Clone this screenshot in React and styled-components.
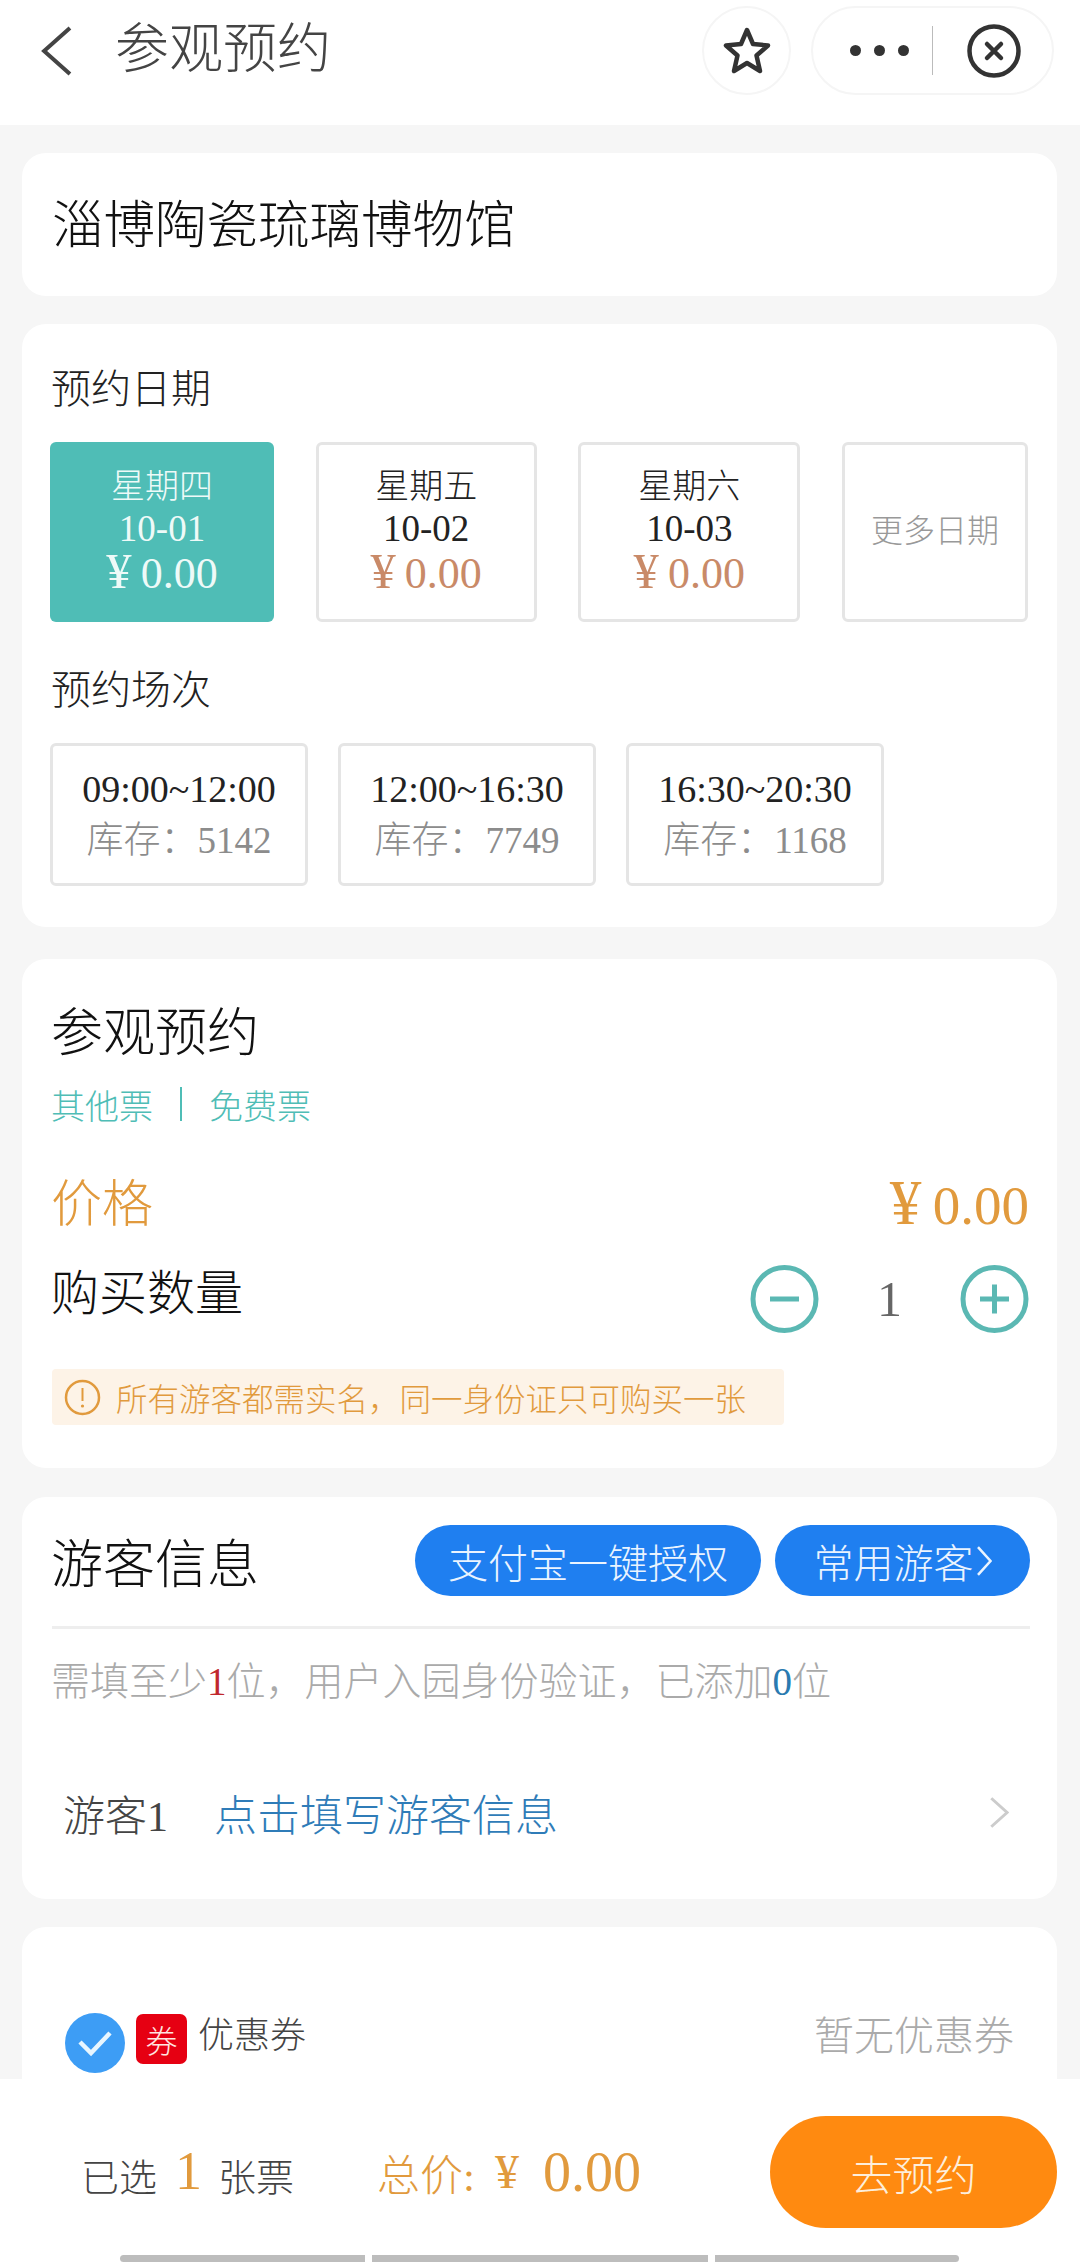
import React from 'react';
import styled, { createGlobalStyle } from 'styled-components';

const orange = '#e19a3d';
const teal = '#4fbdb6';

const GlobalStyle = createGlobalStyle`
    html, body {
        margin: 0;
        padding: 0;
        background: #f6f6f6;
    }
    body {
        font-family: "Liberation Serif", "Noto Sans CJK SC", serif;
        font-weight: 300;
    }
    * {
        box-sizing: border-box;
    }
`;

const Page = styled.div`
    width: 1080px;
    height: 2265px;
    display: flex;
    flex-direction: column;
    overflow: hidden;
`;

const Header = styled.header`
    flex: 0 0 125px;
    background: #fff;
    display: flex;
    align-items: flex-start;
    padding: 6px 26px 0 41px;
`;

const BackBox = styled.div`
    height: 89px;
    display: flex;
    align-items: center;
`;

const HeaderTitle = styled.div`
    height: 89px;
    line-height: 88px;
    margin-left: 43px;
    font-size: 54px;
    color: #444;
`;

const Actions = styled.div`
    margin-left: auto;
    display: flex;
    gap: 20px;
`;

const RoundButton = styled.div`
    width: 89px;
    height: 89px;
    border: 2px solid #f5f5f5;
    border-radius: 50%;
    display: flex;
    align-items: center;
    justify-content: center;
`;

const Capsule = styled.div`
    width: 243px;
    height: 89px;
    border: 2px solid #f5f5f5;
    border-radius: 45px;
    display: flex;
    align-items: center;
    padding-left: 37px;
`;

const Dots = styled.div`
    display: flex;
    gap: 13px;
    width: 82px;
    span {
        width: 11px;
        height: 11px;
        border-radius: 50%;
        background: #333;
    }
`;

const CapsuleLine = styled.div`
    width: 1px;
    height: 49px;
    background: #bbb;
    margin-right: 34px;
`;

const Main = styled.main`
    flex: 1;
    min-height: 0;
    overflow: hidden;
    padding: 28px 23px 0 22px;
    display: flex;
    flex-direction: column;
`;

const Card = styled.section`
    flex: none;
    background: #fff;
    border-radius: 24px;
    height: ${props => props.height}px;
    margin-bottom: ${props => props.gap || 0}px;
    padding: ${props => props.pad};
`;

const ShopName = styled.div`
    height: 143px;
    line-height: 146px;
    font-size: 51.500px;
    color: #111;
`;

const SectionLabel = styled.div`
    height: 40px;
    line-height: 41px;
    font-size: 40px;
    color: #222;
    margin-top: ${props => props.top}px;
    margin-left: 1px;
`;

const DateRow = styled.div`
    display: flex;
    gap: 41.67px;
    margin-top: 33px;
`;

const DateTile = styled.div`
    width: ${props => props.width}px;
    height: 180px;
    border-radius: 6px;
    border: ${props => (props.active ? 'none' : '3px solid #e5e5e5')};
    background: ${props => (props.active ? teal : '#fff')};
    color: ${props => (props.active ? '#eefaf8' : '#222')};
    display: flex;
    flex-direction: column;
    align-items: center;
    justify-content: center;
`;

const DateWeek = styled.div`
    font-size: 34px;
    line-height: 42px;
`;

const DateDay = styled.div`
    font-size: 37px;
    line-height: 42px;
`;

const DatePrice = styled.div`
    font-size: 44px;
    line-height: 48px;
    color: ${props => (props.active ? '#eefaf8' : '#c98a68')};
`;

const Yen = styled.span`
    font-size: 1.15em;
    line-height: 0;
    margin-right: 0.18em;
`;

const MoreDates = styled.div`
    font-size: 32px;
    line-height: 42px;
    margin-top: -2px;
    color: #999;
`;

const SessionRow = styled.div`
    display: flex;
    gap: 30px;
    margin-top: 33px;
`;

const SessionTile = styled.div`
    width: 258px;
    height: 143px;
    border-radius: 6px;
    border: 3px solid #e5e5e5;
    display: flex;
    flex-direction: column;
    align-items: center;
    justify-content: center;
`;

const SessionTime = styled.div`
    font-size: 38px;
    line-height: 52px;
    color: #222;
`;

const SessionStock = styled.div`
    font-size: 37px;
    line-height: 52px;
    color: #8c8c8c;
`;

const BigTitle = styled.div`
    font-size: 52px;
    line-height: 62px;
    margin-left: -1px;
    color: #111;
`;

const Tabs = styled.div`
    display: flex;
    align-items: center;
    height: 40px;
    margin: 19px 0 0 -1px;
    font-size: 34px;
    color: ${teal};
    i {
        width: 2px;
        height: 34px;
        background: ${teal};
        margin: 0 27px;
    }
`;

const PriceRow = styled.div`
    display: flex;
    justify-content: space-between;
    align-items: center;
    height: 60px;
    margin-top: 51px;
    color: ${orange};
`;

const PriceLabel = styled.div`
    font-size: 51px;
    line-height: 56px;
    margin-left: -1px;
`;

const PriceValue = styled.div`
    font-size: 55px;
`;

const QtyRow = styled.div`
    display: flex;
    justify-content: space-between;
    align-items: flex-start;
    height: 68px;
    margin-top: 30px;
`;

const QtyLabel = styled.div`
    font-size: 48px;
    line-height: 58px;
    margin-left: -1px;
    color: #111;
`;

const Stepper = styled.div`
    display: flex;
    align-items: center;
    height: 68px;
`;

const QtyValue = styled.div`
    width: 141px;
    text-align: center;
    font-size: 50px;
    color: #666;
`;

const Notice = styled.div`
    width: 732px;
    height: 56px;
    margin-top: 36px;
    padding-left: 12px;
    border-radius: 4px;
    background: #fdf3e7;
    display: flex;
    align-items: center;
    gap: 15px;
    font-size: 31.500px;
    color: ${orange};
`;

const VisitorHead = styled.div`
    display: flex;
    align-items: center;
    gap: 14px;
    height: 71px;
    padding-bottom: 2px;
`;

const VisitorTitle = styled.div`
    font-size: 52px;
    margin-left: -1px;
    color: #111;
    margin-right: auto;
`;

const BlueButton = styled.div`
    width: ${props => props.width}px;
    height: 71px;
    border-radius: 36px;
    background: #1f7ff0;
    color: #eaf4ff;
    font-size: 40px;
    display: flex;
    align-items: center;
    justify-content: center;
    gap: 3px;
`;

const Divider = styled.div`
    height: 3px;
    background: #eeeeee;
    margin-top: 29px;
`;

const Hint = styled.div`
    height: 40px;
    line-height: 40px;
    font-size: 39px;
    margin: 33px 0 0 -1px;
    color: #aaa;
`;

const HintCount = styled.span`
    color: ${props => props.color};
`;

const VisitorRow = styled.div`
    display: flex;
    align-items: center;
    height: 60px;
    margin-top: 80px;
    padding: 0 21px 0 11px;
`;

const VisitorName = styled.div`
    font-size: 42px;
    color: #444;
`;

const VisitorLink = styled.div`
    font-size: 43px;
    color: #2f7cb8;
    margin: 0 auto 0 46px;
`;

const CouponRow = styled.div`
    display: flex;
    align-items: flex-start;
`;

const CheckMark = styled.div`
    width: 60px;
    height: 60px;
    margin-top: -1px;
    border-radius: 50%;
    background: #3d9df5;
    display: flex;
    align-items: center;
    justify-content: center;
`;

const CouponBadge = styled.div`
    width: 51px;
    height: 50px;
    margin: 0 11px 0 11px;
    border-radius: 7px;
    background: #e60012;
    color: #ffe6e0;
    font-size: 32px;
    display: flex;
    align-items: center;
    justify-content: center;
`;

const CouponLabel = styled.div`
    font-size: 36px;
    line-height: 44px;
    color: #444;
`;

const CouponEmpty = styled.div`
    margin-left: auto;
    font-size: 40px;
    line-height: 46px;
    color: #aaa;
`;

const Footer = styled.footer`
    flex: 0 0 186px;
    background: #fff;
    padding-top: 37px;
`;

const FooterRow = styled.div`
    display: flex;
    align-items: center;
    height: 112px;
    padding: 0 23px 0 81px;
`;

const Selected = styled.div`
    display: flex;
    align-items: center;
    width: 296px;
    font-size: 38px;
    color: #444;
    padding-top: 4px;
`;

const SelectedCount = styled.span`
    font-size: 54px;
    line-height: 60px;
    color: ${orange};
    margin: -6px 16px 0 18px;
`;

const Total = styled.div`
    display: flex;
    align-items: center;
    color: ${orange};
`;

const TotalLabel = styled.span`
    font-size: 43px;
    margin-right: 20px;
`;

const TotalYen = styled.span`
    font-size: 48px;
    line-height: 48px;
    margin-right: 24px;
`;

const TotalValue = styled.span`
    font-size: 56px;
`;

const GoButton = styled.div`
    margin-left: auto;
    width: 287px;
    height: 112px;
    border-radius: 56px;
    background: #ff8a10;
    color: #fdeedb;
    font-size: 42px;
    display: flex;
    align-items: center;
    justify-content: center;
`;

const Bars = styled.div`
    display: flex;
    gap: 7px;
    margin: 27px 0 0 120px;
`;

const Bar = styled.div`
    width: ${props => props.width}px;
    height: 7px;
    background: #bdbdbd;
    border-radius: ${props => props.radius};
`;

const Chevron = ({ w, h, color, sw, flip }) => (
    <svg width={w} height={h} viewBox="0 0 30 50" preserveAspectRatio="none" fill="none">
        <polyline
            points={flip ? '28,2 3,25 28,48' : '2,2 27,25 2,48'}
            stroke={color}
            strokeWidth={sw}
            vectorEffect="non-scaling-stroke"
        />
    </svg>
);

const StarIcon = () => (
    <svg width="50" height="50" viewBox="0 0 50 50" fill="none">
        <path
            d="M25 4 L31 18 L46 19.500 L34.500 29.500 L38 45 L25 37 L12 45 L15.500 29.500 L4 19.500 L19 18 Z"
            stroke="#333"
            strokeWidth="4.500"
            strokeLinejoin="round"
        />
    </svg>
);

const CloseIcon = () => (
    <svg width="54" height="54" viewBox="0 0 54 54" fill="none">
        <circle cx="27" cy="27" r="24.500" stroke="#333" strokeWidth="4.500" />
        <path d="M20 20 L34 34 M34 20 L20 34" stroke="#333" strokeWidth="4.500" strokeLinecap="round" />
    </svg>
);

const StepIcon = ({ plus }) => (
    <svg width="69" height="68" viewBox="0 0 69 68" fill="none">
        <circle cx="34.500" cy="34" r="31.500" stroke="#5bb8b3" strokeWidth="5" />
        <path d={plus ? 'M20 34 H49 M34.500 19.500 V48.500' : 'M20 34 H49'} stroke="#5bb8b3" strokeWidth="5" />
    </svg>
);

const NoticeIcon = () => (
    <svg width="37" height="37" viewBox="0 0 37 37" fill="none">
        <circle cx="18.500" cy="18.500" r="16.500" stroke={orange} strokeWidth="2.500" />
        <path d="M18.500 9 V22" stroke={orange} strokeWidth="2" />
        <circle cx="18.500" cy="27" r="1.600" fill={orange} />
    </svg>
);

const CheckIcon = () => (
    <svg width="38" height="30" viewBox="0 0 38 30" fill="none">
        <path d="M4 14 L15 25 L34 5" stroke="#e8f6ff" strokeWidth="4.500" />
    </svg>
);

const dates = [
    { week: '星期四', day: '10-01', width: 224, active: true },
    { week: '星期五', day: '10-02', width: 221 },
    { week: '星期六', day: '10-03', width: 222 },
];

const sessions = [
    { time: '09:00~12:00', stock: 5142 },
    { time: '12:00~16:30', stock: 7749 },
    { time: '16:30~20:30', stock: 1168 },
];

const App = () => {
    return (
        <Page>
            <GlobalStyle />
            <Header>
                <BackBox>
                    <Chevron w={31} h={50} color="#444" sw={4} flip />
                </BackBox>
                <HeaderTitle>参观预约</HeaderTitle>
                <Actions>
                    <RoundButton>
                        <StarIcon />
                    </RoundButton>
                    <Capsule>
                        <Dots>
                            <span />
                            <span />
                            <span />
                        </Dots>
                        <CapsuleLine />
                        <CloseIcon />
                    </Capsule>
                </Actions>
            </Header>
            <Main>
                <Card height={143} gap={28} pad="0 0 0 30px">
                    <ShopName>淄博陶瓷琉璃博物馆</ShopName>
                </Card>
                <Card height={603} gap={32} pad="0 0 0 28px">
                    <SectionLabel top={45}>预约日期</SectionLabel>
                    <DateRow>
                        {dates.map(item => (
                            <DateTile key={item.day} width={item.width} active={item.active}>
                                <DateWeek>{item.week}</DateWeek>
                                <DateDay>{item.day}</DateDay>
                                <DatePrice active={item.active}>
                                    <Yen>¥</Yen>0.00
                                </DatePrice>
                            </DateTile>
                        ))}
                        <DateTile width={186}>
                            <MoreDates>更多日期</MoreDates>
                        </DateTile>
                    </DateRow>
                    <SectionLabel top={48}>预约场次</SectionLabel>
                    <SessionRow>
                        {sessions.map(item => (
                            <SessionTile key={item.time}>
                                <SessionTime>{item.time}</SessionTime>
                                <SessionStock>库存：{item.stock}</SessionStock>
                            </SessionTile>
                        ))}
                    </SessionRow>
                </Card>
                <Card height={509} gap={29} pad="44px 28px 0 30px">
                    <BigTitle>参观预约</BigTitle>
                    <Tabs>
                        其他票
                        <i />
                        免费票
                    </Tabs>
                    <PriceRow>
                        <PriceLabel>价格</PriceLabel>
                        <PriceValue>
                            <Yen>¥</Yen>0.00
                        </PriceValue>
                    </PriceRow>
                    <QtyRow>
                        <QtyLabel>购买数量</QtyLabel>
                        <Stepper>
                            <StepIcon />
                            <QtyValue>1</QtyValue>
                            <StepIcon plus />
                        </Stepper>
                    </QtyRow>
                    <Notice>
                        <NoticeIcon />
                        所有游客都需实名，同一身份证只可购买一张
                    </Notice>
                </Card>
                <Card height={402} gap={28} pad="29px 27px 0 30px">
                    <VisitorHead>
                        <VisitorTitle>游客信息</VisitorTitle>
                        <BlueButton width={346}>支付宝一键授权</BlueButton>
                        <BlueButton width={255}>
                            常用游客
                            <Chevron w={15} h={30} color="#eaf4ff" sw={2.5} />
                        </BlueButton>
                    </VisitorHead>
                    <Divider />
                    <Hint>
                        需填至少<HintCount color="#c0282d">1</HintCount>位，用户入园身份验证，已添加
                        <HintCount color="#2a7ab0">0</HintCount>位
                    </Hint>
                    <VisitorRow>
                        <VisitorName>游客1</VisitorName>
                        <VisitorLink>点击填写游客信息</VisitorLink>
                        <Chevron w={19} h={31} color="#ccc" sw={3} />
                    </VisitorRow>
                </Card>
                <Card height={300} pad="87px 43px 0">
                    <CouponRow>
                        <CheckMark>
                            <CheckIcon />
                        </CheckMark>
                        <CouponBadge>券</CouponBadge>
                        <CouponLabel>优惠券</CouponLabel>
                        <CouponEmpty>暂无优惠券</CouponEmpty>
                    </CouponRow>
                </Card>
            </Main>
            <Footer>
                <FooterRow>
                    <Selected>
                        已选<SelectedCount>1</SelectedCount>张票
                    </Selected>
                    <Total>
                        <TotalLabel>总价:</TotalLabel>
                        <TotalYen>¥</TotalYen>
                        <TotalValue>0.00</TotalValue>
                    </Total>
                    <GoButton>去预约</GoButton>
                </FooterRow>
                <Bars>
                    <Bar width={245} radius="4px 0 0 4px" />
                    <Bar width={336} radius="0" />
                    <Bar width={244} radius="0 4px 4px 0" />
                </Bars>
            </Footer>
        </Page>
    );
};

export default App;
